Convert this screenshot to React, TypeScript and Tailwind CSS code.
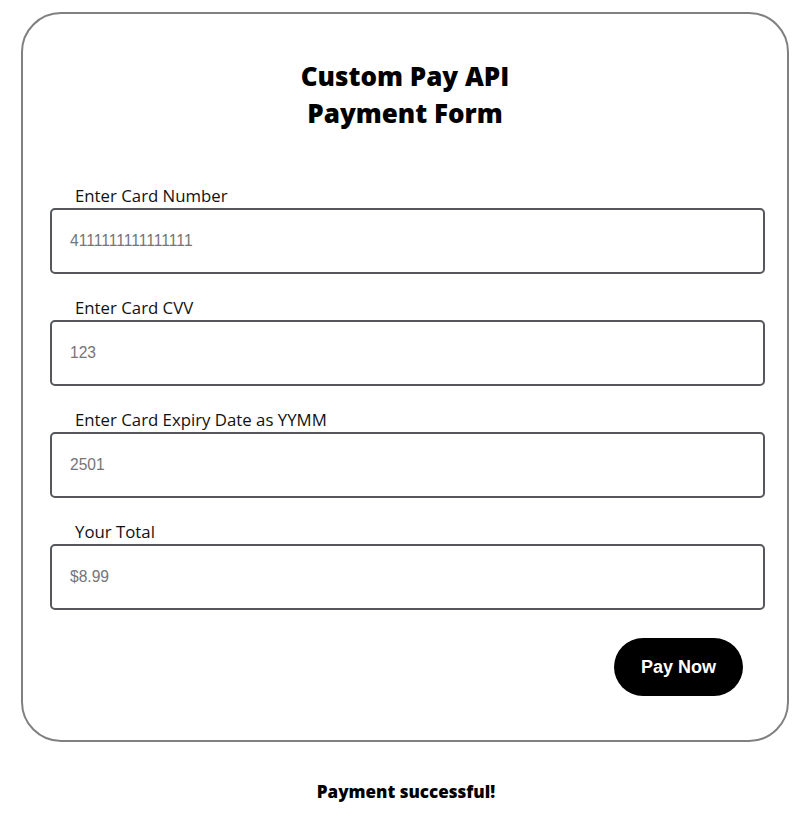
import React from "react";

const fields = [
  { label: "Enter Card Number", placeholder: "4111111111111111" },
  { label: "Enter Card CVV", placeholder: "123" },
  { label: "Enter Card Expiry Date as YYMM", placeholder: "2501" },
  { label: "Your Total", placeholder: "$8.99" },
];

export default function App() {
  return (
    <div className="min-h-[821px] w-[812px] bg-white pt-[12px] font-['Open_Sans',sans-serif] text-black">
      <div className="ml-[21px] w-[768px] h-[730px] rounded-[40px] border-2 border-[#808080] pt-[44px]">
        <h1 className="text-center text-[26px] leading-[37px] font-extrabold font-['Open_Sans',sans-serif]">
          Custom Pay API
          <br />
          Payment Form
        </h1>
        <div className="mt-[51px] pl-[27px] pr-[22px]">
          {fields.map((f) => (
            <div key={f.label} className="mb-[21px]">
              <div className="pl-[25px] text-[16.8px] leading-[25px] h-[25px] text-[#111]">{f.label}</div>
              <input
                className="block w-full h-[66px] rounded-[5px] border-2 border-[#55575c] px-[18px] text-[15.6px] font-['Liberation_Sans',Arial,sans-serif] placeholder:text-[#757575] outline-none"
                placeholder={f.placeholder}
              />
            </div>
          ))}
          <div className="flex justify-end pr-[22px] mt-[28px]">
            <button className="w-[129px] h-[58px] rounded-full bg-black text-white text-[18px] font-bold font-['Liberation_Sans',Arial,sans-serif]">
              Pay Now
            </button>
          </div>
        </div>
      </div>
      <p className="mt-[38px] text-center text-[17px] leading-[24px] font-extrabold">Payment successful!</p>
    </div>
  );
}
